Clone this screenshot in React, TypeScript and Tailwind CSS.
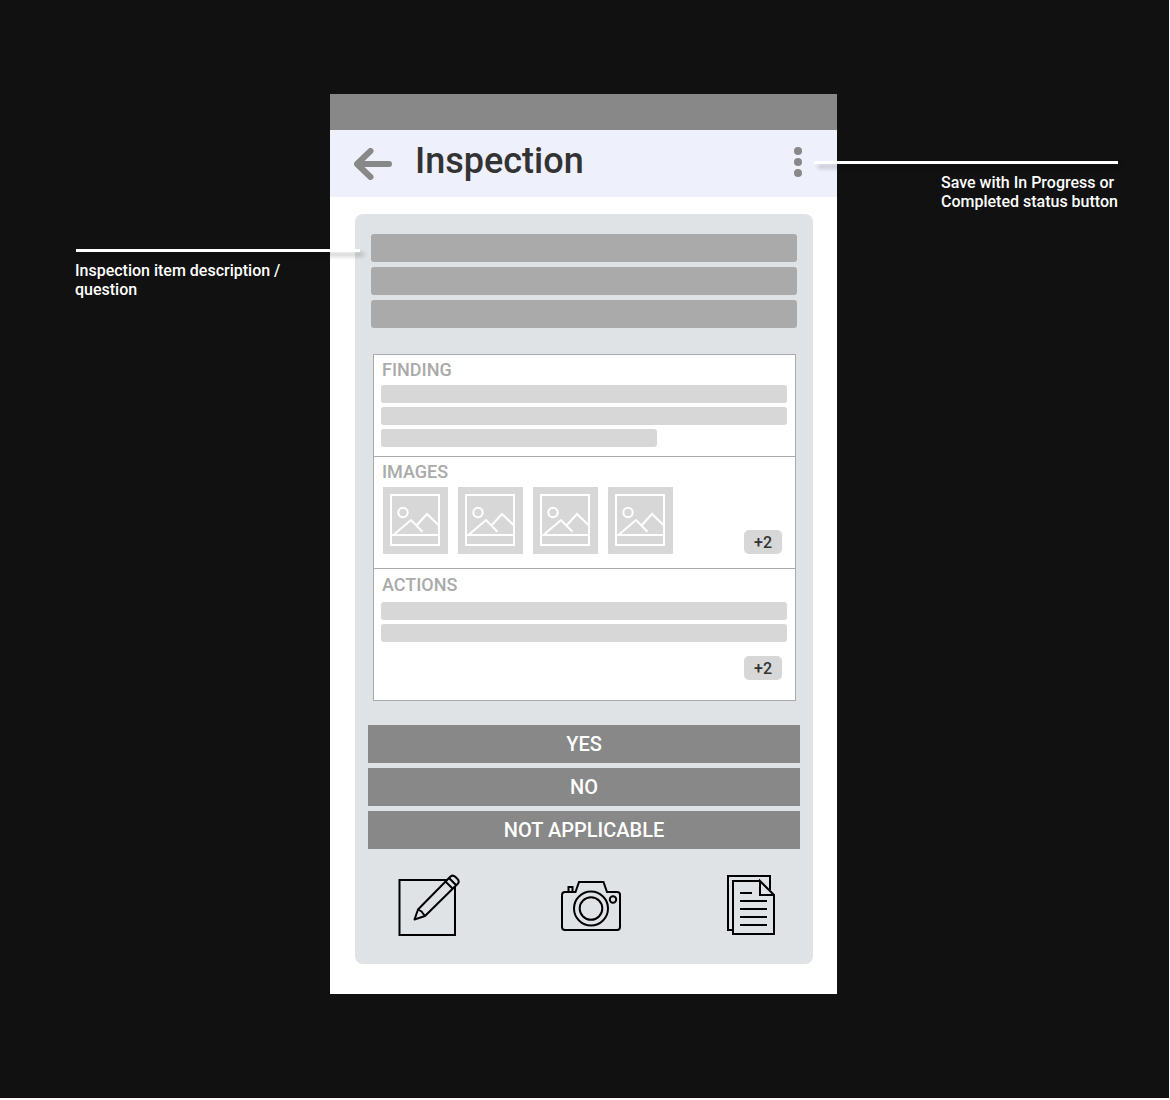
import React from "react";

function Callout({
  children,
  side,
}: {
  children: React.ReactNode;
  side: "left" | "right";
}) {
  const left = side === "left";
  return (
    <aside
      className={
        left
          ? "relative z-10 pt-[155px] pl-[75px]"
          : "relative z-10 pt-[67px] pr-[49px]"
      }
    >
      <div
        className={
          left
            ? "ml-px -mr-[30px] h-[3px] bg-white shadow-[4px_4px_4px_rgba(0,0,0,0.25)]"
            : "-ml-[23px] h-[3px] bg-white shadow-[4px_4px_4px_rgba(0,0,0,0.25)]"
        }
      />
      <p
        className={
          left
            ? "mt-[9px] max-w-[215px] text-base leading-[19px] font-medium text-white"
            : "mt-[9px] ml-auto max-w-[177px] text-base leading-[19px] font-medium text-white"
        }
      >
        {children}
      </p>
    </aside>
  );
}

function Line({ short = false }: { short?: boolean }) {
  return (
    <div
      className={
        short
          ? "h-[18px] w-[68%] rounded-[3px] bg-[#d7d7d7]"
          : "h-[18px] rounded-[3px] bg-[#d7d7d7]"
      }
    />
  );
}

function Heading({ children }: { children: React.ReactNode }) {
  return (
    <h2 className="mb-px pl-px text-lg leading-5 font-medium text-[#aaa]">
      {children}
    </h2>
  );
}

function More({ label }: { label: string }) {
  return (
    <button
      type="button"
      aria-label={label}
      className="h-6 w-[38px] rounded-[5px] bg-[#d7d7d7] pt-[2px] text-base leading-[22px] font-medium text-[#333]"
    >
      +2
    </button>
  );
}

function Thumbnail() {
  return (
    <svg
      width="65"
      height="67"
      viewBox="0 0 65 67"
      fill="none"
      stroke="#fff"
      strokeWidth="2"
      className="bg-[#d7d7d7]"
      role="img"
      aria-label="Image placeholder"
    >
      <rect x="8" y="8" width="48" height="50" />
      <path d="M8 48H56" />
      <circle cx="20" cy="25.5" r="4.7" />
      <path d="M11 47.5L28 33L39.5 44.8" />
      <path d="M33.5 38.5L44 27L56 38.5" />
    </svg>
  );
}

function EditIcon() {
  return (
    <svg width="62" height="62" viewBox="0 0 62 62" fill="none" stroke="#000" strokeWidth="2">
      <path d="M49.5 6H1.5V61H57V12" />
      <path
        d="M16.5 45.5L20 35.5L52.5 2.500Q55 .5 57.500 3L59.500 5Q62 7.500 59.500 10L27 42Z"
        strokeLinejoin="round"
      />
      <path d="M20 35.5L23.500 37.500L27 42M47.500 7.500L54.500 14.500M51 4L58 11" />
    </svg>
  );
}

function CameraIcon() {
  return (
    <svg width="66" height="52" viewBox="0 0 66 52" fill="none" stroke="#000" strokeWidth="2">
      <path d="M4 12H14.500L18 2H42.500L46 12H56Q59 12 59 15V47Q59 50 56 50H4Q1 50 1 47V15Q1 12 4 12Z" />
      <path d="M7.500 12V7H11.500V12" />
      <circle cx="30" cy="28.500" r="17" />
      <circle cx="30" cy="28.500" r="11.300" />
      <circle cx="52" cy="19.500" r="3.200" />
    </svg>
  );
}

function DocumentsIcon() {
  return (
    <svg width="49" height="61" viewBox="0 0 49 61" fill="none" stroke="#000" strokeWidth="2">
      <path d="M6 55H1V1H43V15" />
      <path d="M33 6H6V59H47V20L33 6V20H47" />
      <path d="M13 18H25M13 26H40M13 34H40M13 42H40M13 50H40" />
    </svg>
  );
}

const answers = ["YES", "NO", "NOT APPLICABLE"];

export default function App() {
  return (
    <div className="min-h-screen bg-white pr-px pb-[2px] font-['Roboto',sans-serif]">
      <main className="grid grid-cols-[minmax(0,1fr)_minmax(0,507px)_minmax(0,1fr)] items-start bg-[#111] pt-[94px] pr-[2px] pb-[104px]">
        <Callout side="left">Inspection item description / question</Callout>

        <section className="bg-white pb-[30px]">
          <div className="h-9 bg-[#888]" />
          <header className="flex h-[67px] items-center bg-[#eef0fc] pr-[34px] pl-6">
            <button type="button" aria-label="Back">
              <svg width="38" height="32" viewBox="0 0 38 32" fill="none" stroke="#888" strokeWidth="6" strokeLinecap="round" strokeLinejoin="round">
                <path d="M16.500 3L3 16L16.500 29M4 16H35" />
              </svg>
            </button>
            <h1 className="pb-[5px] pl-[23px] text-4xl leading-10 font-medium text-[#333]">
              Inspection
            </h1>
            <button type="button" aria-label="Status options" className="ml-auto pb-[3px]">
              <svg width="10" height="30" viewBox="0 0 10 30" fill="#888">
                <circle cx="5" cy="4" r="4" />
                <circle cx="5" cy="15" r="4" />
                <circle cx="5" cy="26" r="4" />
              </svg>
            </button>
          </header>

          <div className="mt-[17px] mr-6 ml-[25px] rounded-lg bg-[#dfe3e6] px-[13px] pt-5 pb-7">
            <div className="flex flex-col gap-[5px] px-[3px]">
              <div className="h-7 rounded-[3px] bg-[#aaa]" />
              <div className="h-7 rounded-[3px] bg-[#aaa]" />
              <div className="h-7 rounded-[3px] bg-[#aaa]" />
            </div>

            <div className="mt-[26px] mr-1 ml-[5px] border border-[#aaa] bg-white">
              <section className="flex flex-col gap-1 border-b border-[#aaa] pt-[5px] pr-2 pb-[9px] pl-[7px]">
                <Heading>FINDING</Heading>
                <Line />
                <Line />
                <Line short />
              </section>
              <section className="flex flex-col gap-1 border-b border-[#aaa] pt-[5px] pr-[13px] pb-[14px] pl-[7px]">
                <Heading>IMAGES</Heading>
                <div className="flex items-end gap-[10px] pl-[2px]">
                  <Thumbnail />
                  <Thumbnail />
                  <Thumbnail />
                  <Thumbnail />
                  <div className="ml-auto flex">
                    <More label="2 more images" />
                  </div>
                </div>
              </section>
              <section className="flex flex-col gap-1 pt-[6px] pr-2 pb-5 pl-[7px]">
                <Heading>ACTIONS</Heading>
                <div className="mt-[2px] flex flex-col gap-1">
                  <Line />
                  <Line />
                </div>
                <div className="mt-[10px] mr-[5px] flex justify-end">
                  <More label="2 more actions" />
                </div>
              </section>
            </div>

            <div className="mt-6 flex flex-col gap-[5px]">
              {answers.map((answer) => (
                <button
                  key={answer}
                  type="button"
                  className="h-[38px] bg-[#888] text-xl leading-[38px] font-medium text-white"
                >
                  {answer}
                </button>
              ))}
            </div>

            <div className="mt-[25px] flex items-center justify-between pr-6 pl-[30px]">
              <button type="button" aria-label="Add note">
                <EditIcon />
              </button>
              <button type="button" aria-label="Take photo" className="pt-[2px]">
                <CameraIcon />
              </button>
              <button type="button" aria-label="Documents">
                <DocumentsIcon />
              </button>
            </div>
          </div>
        </section>

        <Callout side="right">Save with In Progress or Completed status button</Callout>
      </main>
    </div>
  );
}
